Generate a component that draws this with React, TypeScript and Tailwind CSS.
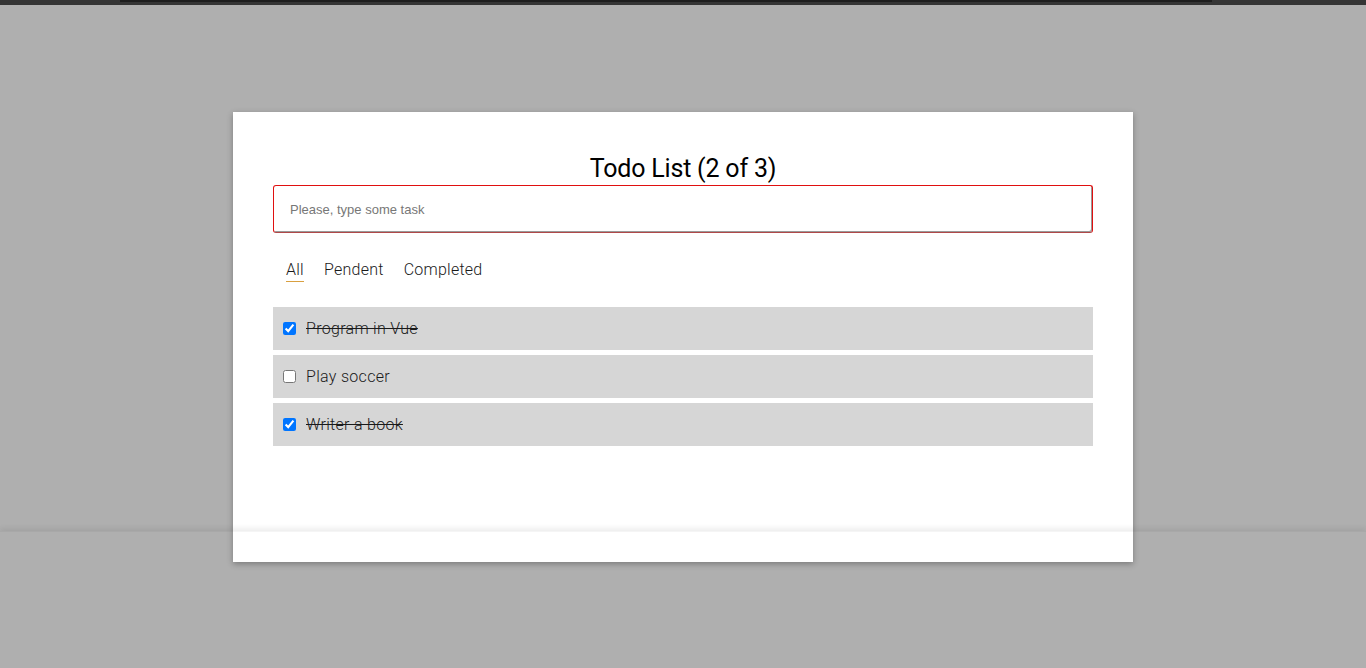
import React, { useState } from "react";

const FONT = { fontFamily: "Roboto, 'Liberation Sans', sans-serif" };

export default function App() {
  const [tab, setTab] = useState("All");
  const [todos, setTodos] = useState([
    { id: 1, text: "Program in Vue", done: true },
    { id: 2, text: "Play soccer", done: false },
    { id: 3, text: "Writer a book", done: true },
  ]);
  const toggle = (id: number) =>
    setTodos((t) => t.map((x) => (x.id === id ? { ...x, done: !x.done } : x)));

  return (
    <div className="relative min-h-[668px] h-[668px] overflow-hidden bg-[#afafaf]" style={FONT}>
      <div className="h-[5px] bg-[#353535] flex">
        <div className="ml-[120px] w-[1092px] h-[2px] bg-[#1e1e1e]" />
      </div>
      <div className="pt-[107px] flex justify-center">
        <div className="relative z-10 w-[900px] h-[450px] bg-white shadow-[0_2px_6px_rgba(0,0,0,0.3)] px-[40px] pt-[40px]">
          <h1 className="text-center text-[25px] leading-[33px] text-black font-normal tracking-[-0.2px]">
            Todo List (2 of 3)
          </h1>
          <input
            className="block w-full h-[48px] rounded-[3px] border border-[#e01010] border-b-[#b04848] shadow-[inset_-1px_-1px_0_#9a9a9a] px-[16px] text-[13px] outline-none placeholder:text-[#777]"
            style={{ fontFamily: "'Liberation Sans', Arial, sans-serif" }}
            placeholder="Please, type some task"
          />
          <div className="flex mt-[27px] pl-[13px] gap-[20px] text-[16px] font-light tracking-[0.25px] text-[#1a1a1a]">
            {["All", "Pendent", "Completed"].map((t) => (
              <button
                key={t}
                onClick={() => setTab(t)}
                className={`leading-[20px] pb-[1px] border-b ${tab === t ? "border-[#d9a040]" : "border-transparent"}`}
              >
                {t}
              </button>
            ))}
          </div>
          <div className="mt-[25px] flex flex-col gap-[5px]">
            {todos
              .filter((x) => (tab === "All" ? true : tab === "Pendent" ? !x.done : x.done))
              .map((x) => (
                <div key={x.id} className="h-[43px] bg-[#d6d6d6] flex items-center pl-[10px]">
                  <input
                    type="checkbox"
                    checked={x.done}
                    onChange={() => toggle(x.id)}
                    className="m-0 w-[13px] h-[13px]"
                  />
                  <span className={`ml-[10px] text-[16px] font-light tracking-[0.3px] text-[#1a1a1a] ${x.done ? "line-through" : ""}`}>
                    {x.text}
                  </span>
                </div>
              ))}
          </div>
        </div>
      </div>
      <div className="absolute left-0 right-0 top-[531px] bottom-0 z-20 pointer-events-none shadow-[0_-3px_5px_rgba(0,0,0,0.07)] border-t border-black/[0.04]" />
    </div>
  );
}
